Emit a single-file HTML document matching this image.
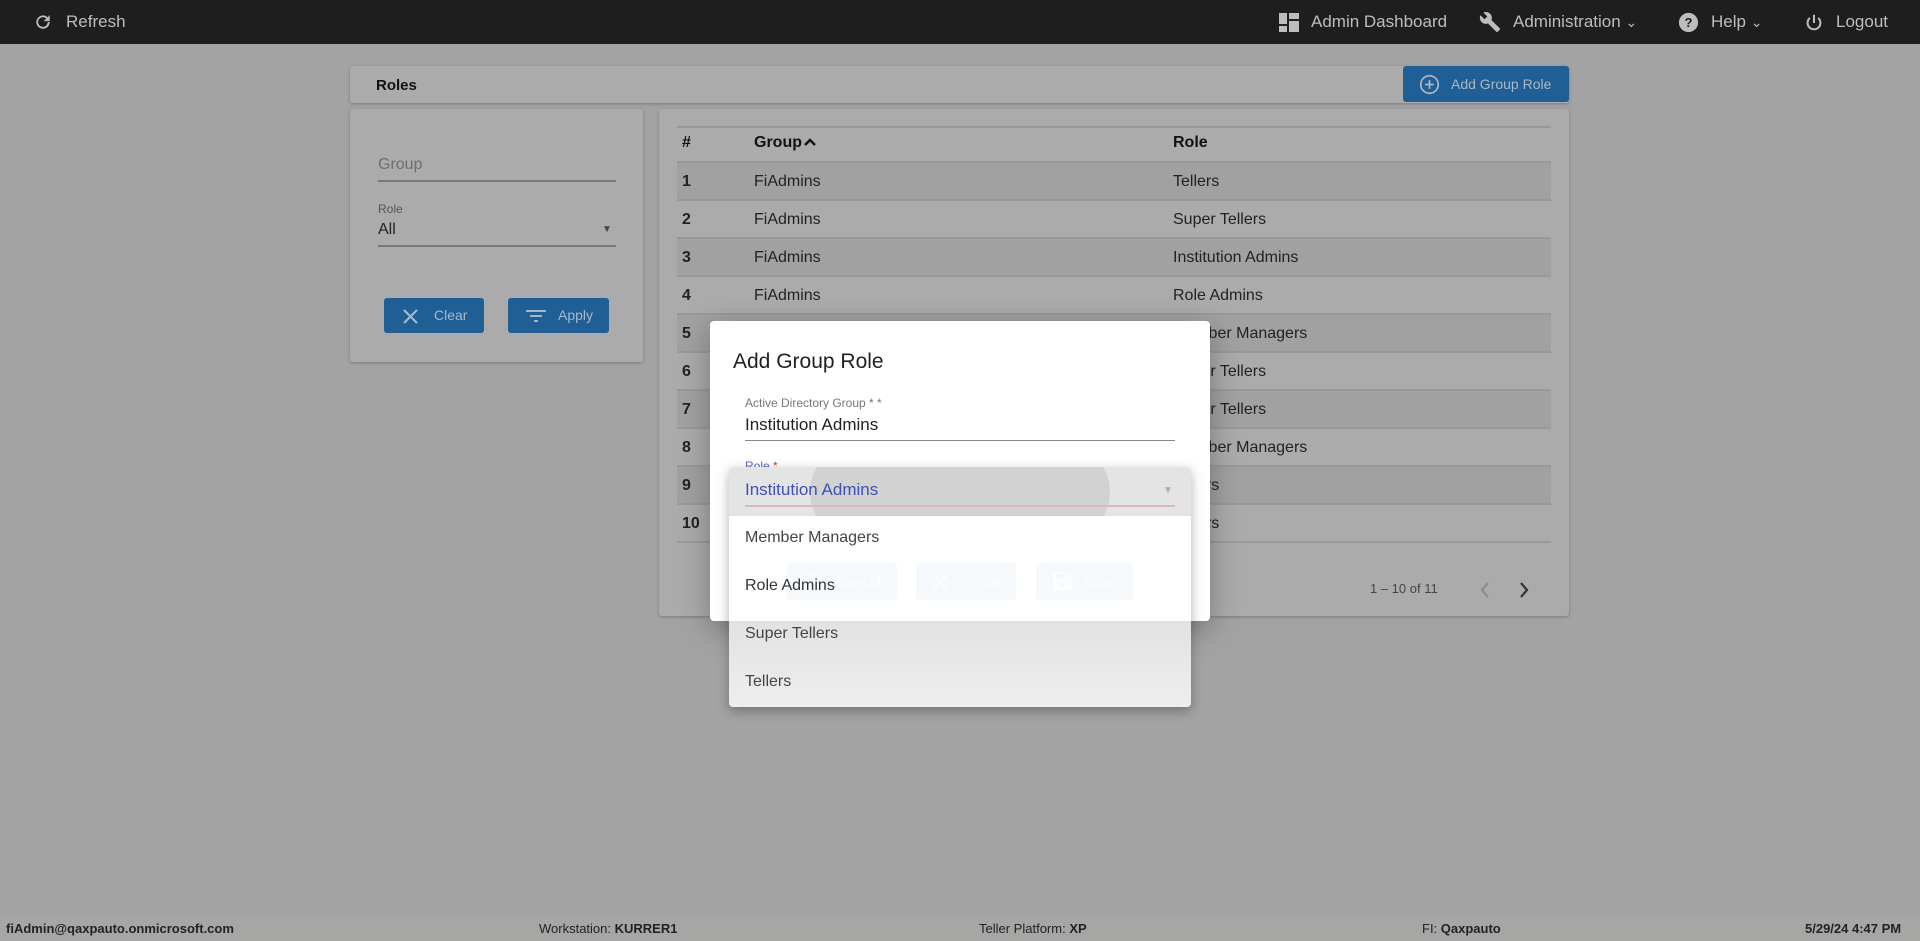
<!DOCTYPE html>
<html><head><meta charset="utf-8"><style>
*{box-sizing:border-box;margin:0;padding:0}
body{width:1920px;height:941px;background:#a3a3a3;font-family:"Liberation Sans",Arial,sans-serif;position:relative;overflow:hidden;color:#222}
.abs{position:absolute}
.nav{left:0;top:0;width:1920px;height:44px;background:#1e1e1e;color:#bdbdbd;font-size:17px}
.nav .t{position:absolute;top:12px;white-space:nowrap}
.card{background:#ababab;border-radius:3px;box-shadow:0 1px 3px rgba(0,0,0,.25)}
.btn{background:#1f5f95;border-radius:3px;color:#a9b8c6;font-size:14px}
.row{position:absolute;left:677px;width:874px;height:38px;border-bottom:2px solid #999;font-size:16px;color:#222}
.row span{position:absolute;top:10px}
.odd{background:#a1a1a1}
.ft{top:915px;height:26px;left:0;width:1920px;background:#a6a7a5;font-size:13px}
.ft span{position:absolute;top:6px;color:#222}
</style></head><body>
<div class="abs nav">
 <svg class="abs" style="left:33px;top:12px" width="20" height="20" viewBox="0 0 24 24"><path d="M17.6 6.4A8 8 0 1 0 20 12h-2.3a5.8 5.8 0 1 1-1.7-4.1L12.6 11H20V3.6z" fill="#bdbdbd"/></svg>
 <span class="t" style="left:66px">Refresh</span>
 <svg class="abs" style="left:1279px;top:13px" width="20" height="19" viewBox="0 0 20 19"><rect x="0" y="0" width="8" height="11" fill="#bdbdbd"/><rect x="0" y="13" width="8" height="6" fill="#bdbdbd"/><rect x="10" y="0" width="10" height="6" fill="#bdbdbd"/><rect x="10" y="8" width="10" height="11" fill="#bdbdbd"/></svg>
 <span class="t" style="left:1311px">Admin Dashboard</span>
 <svg class="abs" style="left:1479px;top:11px" width="22" height="22" viewBox="0 0 24 24"><path d="M22.7 19l-9.1-9.1c.9-2.3.4-5-1.5-6.9-2-2-5-2.4-7.4-1.3L9 6 6 9 1.6 4.7C.4 7.1.9 10.1 2.9 12.1c1.9 1.9 4.6 2.4 6.9 1.5l9.1 9.1c.4.4 1 .4 1.4 0l2.3-2.3c.5-.4.5-1.1.1-1.4z" fill="#bdbdbd"/></svg>
 <span class="t" style="left:1513px">Administration <small>⌄</small></span>
 <svg class="abs" style="left:1678px;top:12px" width="21" height="21" viewBox="0 0 24 24"><circle cx="12" cy="12" r="11" fill="#bdbdbd"/><text x="12" y="17" text-anchor="middle" font-size="15" font-weight="bold" fill="#1e1e1e" font-family="Liberation Sans">?</text></svg>
 <span class="t" style="left:1711px">Help <small>⌄</small></span>
 <svg class="abs" style="left:1803px;top:12px" width="22" height="22" viewBox="0 0 24 24" fill="none" stroke="#bdbdbd" stroke-width="2.2"><path d="M12 3v9"/><path d="M7.5 6.5a7 7 0 1 0 9 0"/></svg>
 <span class="t" style="left:1836px">Logout</span>
</div>

<div class="abs card" style="left:350px;top:66px;width:1219px;height:37px"><span class="abs" style="left:26px;top:11px;font-weight:bold;font-size:15px;color:#111">Roles</span></div>
<div class="abs btn" style="left:1403px;top:66px;width:166px;height:36px">
 <svg class="abs" style="left:16px;top:8px" width="21" height="21" viewBox="0 0 24 24" fill="none" stroke="#a9b8c6" stroke-width="2"><circle cx="12" cy="12" r="10"/><path d="M12 7v10M7 12h10"/></svg>
 <span class="abs" style="left:48px;top:10px">Add Group Role</span></div>

<div class="abs card" style="left:350px;top:109px;width:293px;height:253px">
 <span class="abs" style="left:28px;top:47px;font-size:16px;color:#6e6e6e">Group</span>
 <div class="abs" style="left:28px;top:71px;width:238px;height:2px;background:#7a7a7a"></div>
 <span class="abs" style="left:28px;top:93px;font-size:12px;color:#555">Role</span>
 <span class="abs" style="left:28px;top:112px;font-size:16px;color:#222">All</span>
 <span class="abs" style="left:252px;top:115px;font-size:10px;color:#444">▼</span>
 <div class="abs" style="left:28px;top:136px;width:238px;height:2px;background:#7a7a7a"></div>
 <div class="abs btn" style="left:34px;top:189px;width:100px;height:35px">
  <svg class="abs" style="left:19px;top:11px" width="15" height="15" viewBox="0 0 15 15" stroke="#a9b8c6" stroke-width="2.2"><path d="M1 1l13 13M14 1L1 14"/></svg>
  <span class="abs" style="left:50px;top:9px">Clear</span></div>
 <div class="abs btn" style="left:158px;top:189px;width:101px;height:35px">
  <svg class="abs" style="left:18px;top:11px" width="20" height="14" viewBox="0 0 20 14" stroke="#a9b8c6" stroke-width="2"><path d="M0 2h20M4 7h12M8 12h4"/></svg>
  <span class="abs" style="left:50px;top:9px">Apply</span></div>
</div>

<div class="abs card" style="left:659px;top:109px;width:910px;height:507px"></div>
<div class="abs" style="left:677px;top:126px;width:874px;height:2px;background:#999"></div>
<div class="abs" style="left:682px;top:134px;font-weight:bold;font-size:16px;color:#111">#</div>
<div class="abs" style="left:754px;top:134px;font-weight:bold;font-size:16px;color:#111">Group<svg width="14" height="10" viewBox="0 0 14 10" style="margin-left:1px"><path d="M2 8l5-5 5 5" fill="none" stroke="#111" stroke-width="2.5"/></svg></div>
<div class="abs" style="left:1173px;top:134px;font-weight:bold;font-size:16px;color:#111">Role</div>
<div class="abs" style="left:677px;top:161px;width:874px;height:3px;background:#999"></div>

<div class="row odd" style="top:163px"><span style="left:5px;font-weight:bold">1</span><span style="left:77px">FiAdmins</span><span style="left:496px">Tellers</span></div>
<div class="row" style="top:201px"><span style="left:5px;font-weight:bold">2</span><span style="left:77px">FiAdmins</span><span style="left:496px">Super Tellers</span></div>
<div class="row odd" style="top:239px"><span style="left:5px;font-weight:bold">3</span><span style="left:77px">FiAdmins</span><span style="left:496px">Institution Admins</span></div>
<div class="row" style="top:277px"><span style="left:5px;font-weight:bold">4</span><span style="left:77px">FiAdmins</span><span style="left:496px">Role Admins</span></div>
<div class="row odd" style="top:315px"><span style="left:5px;font-weight:bold">5</span><span style="left:496px">Member Managers</span></div>
<div class="row" style="top:353px"><span style="left:5px;font-weight:bold">6</span><span style="left:496px">Super Tellers</span></div>
<div class="row odd" style="top:391px"><span style="left:5px;font-weight:bold">7</span><span style="left:496px">Super Tellers</span></div>
<div class="row" style="top:429px"><span style="left:5px;font-weight:bold">8</span><span style="left:496px">Member Managers</span></div>
<div class="row odd" style="top:467px"><span style="left:5px;font-weight:bold">9</span><span style="left:496px">Tellers</span></div>
<div class="row" style="top:505px"><span style="left:5px;font-weight:bold">10</span><span style="left:496px">Tellers</span></div>

<div class="abs" style="left:1370px;top:581px;font-size:13px;color:#444">1 – 10 of 11</div>
<svg class="abs" style="left:1478px;top:581px" width="14" height="18" viewBox="0 0 14 18"><path d="M10 2L4 9l6 7" fill="none" stroke="#888" stroke-width="2"/></svg>
<svg class="abs" style="left:1517px;top:581px" width="14" height="18" viewBox="0 0 14 18"><path d="M4 2l6 7-6 7" fill="none" stroke="#333" stroke-width="2.2"/></svg>

<!-- dialog -->
<div class="abs" style="left:710px;top:321px;width:500px;height:300px;background:#fff;border-radius:4px;box-shadow:0 8px 30px rgba(0,0,0,.3)">
 <span class="abs" style="left:23px;top:29px;font-size:21px;color:#222">Add Group Role</span>
 <span class="abs" style="left:35px;top:75px;font-size:12px;color:#777">Active Directory Group * *</span>
 <span class="abs" style="left:35px;top:94px;font-size:17px;color:#222">Institution Admins</span>
 <div class="abs" style="left:35px;top:119px;width:430px;height:1px;background:#888"></div>
 <span class="abs" style="left:35px;top:138px;font-size:12px;color:#5c6bc0">Role <span style="color:#e53935">*</span></span>
 <div class="abs" style="left:77px;top:242px;width:110px;height:37px;background:#dbe8f5;border-radius:3px"></div>
 <svg class="abs" style="left:93px;top:250px" width="21" height="21" viewBox="0 0 24 24" fill="none" stroke="#eef4fb" stroke-width="2.5"><circle cx="12" cy="12" r="9"/></svg>
 <span class="abs" style="left:127px;top:252px;font-size:14px;color:#f3f8fc">Cancel</span>
 <div class="abs" style="left:206px;top:242px;width:100px;height:37px;background:#dbe8f5;border-radius:3px"></div>
 <svg class="abs" style="left:223px;top:253px" width="15" height="15" viewBox="0 0 15 15" stroke="#f3f8fc" stroke-width="2.5"><path d="M1 1l13 13M14 1L1 14"/></svg>
 <span class="abs" style="left:259px;top:252px;font-size:14px;color:#f3f8fc">Clear</span>
 <div class="abs" style="left:326px;top:242px;width:97px;height:37px;background:#dbe8f5;border-radius:3px"></div>
 <svg class="abs" style="left:343px;top:251px" width="19" height="19" viewBox="0 0 19 19"><path d="M0 2a2 2 0 0 1 2-2h12l5 5v12a2 2 0 0 1-2 2H2a2 2 0 0 1-2-2z" fill="#f3f8fc"/><rect x="3" y="2" width="10" height="5" fill="#dbe8f5"/><circle cx="9.5" cy="13" r="2.5" fill="#dbe8f5"/></svg>
 <span class="abs" style="left:375px;top:252px;font-size:14px;color:#f3f8fc">Save</span>
</div>

<!-- dropdown overlay -->
<div class="abs" style="left:729px;top:467px;width:462px;height:240px;border-radius:4px;overflow:hidden;box-shadow:0 4px 12px rgba(0,0,0,.3)">
 <div class="abs" style="left:0;top:0;width:462px;height:49px;background:#e4e4e4;overflow:hidden">
  <div class="abs" style="left:81px;top:-60px;width:300px;height:170px;border-radius:50%;background:#d2d2d2"></div>
 </div>
 <span class="abs" style="left:16px;top:13px;font-size:17px;color:#3f51b5">Institution Admins</span>
 <span class="abs" style="left:434px;top:18px;font-size:10px;color:#aab">▼</span>
 <div class="abs" style="left:16px;top:38px;width:430px;height:2px;background:#d8b8c4"></div>
 <div class="abs" style="left:0;top:49px;width:462px;height:105px;background:rgba(255,255,255,.72)"></div>
 <div class="abs" style="left:0;top:154px;width:462px;height:86px;background:linear-gradient(#e2e2e2,#eeeeee)"></div>
 <span class="abs" style="left:16px;top:62px;font-size:16px;color:#444">Member Managers</span>
 <span class="abs" style="left:16px;top:110px;font-size:16px;color:#333">Role Admins</span>
 <span class="abs" style="left:16px;top:158px;font-size:16px;color:#444">Super Tellers</span>
 <span class="abs" style="left:16px;top:206px;font-size:16px;color:#444">Tellers</span>
</div>

<div class="abs ft">
 <span style="left:6px;font-weight:bold">fiAdmin@qaxpauto.onmicrosoft.com</span>
 <span style="left:539px">Workstation: <b>KURRER1</b></span>
 <span style="left:979px">Teller Platform: <b>XP</b></span>
 <span style="left:1422px">FI: <b>Qaxpauto</b></span>
 <span style="left:1805px;font-weight:bold">5/29/24 4:47 PM</span>
</div>
</body></html>
